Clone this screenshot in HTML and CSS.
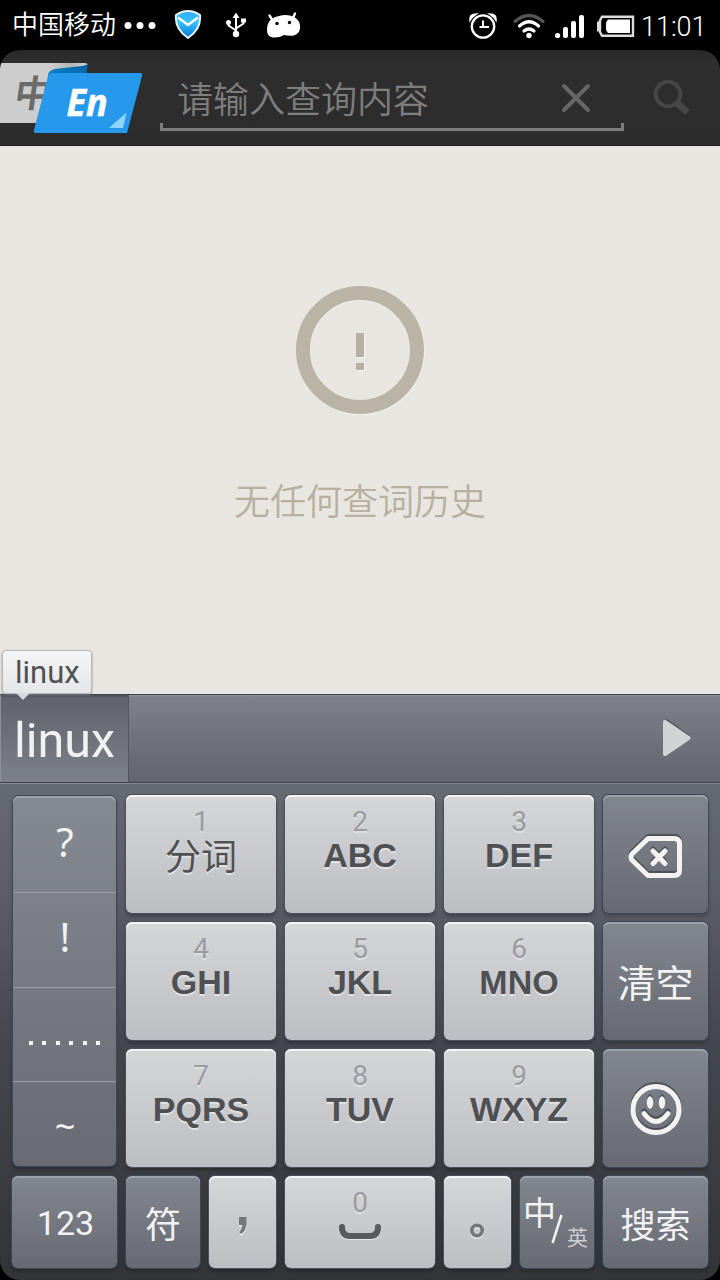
FILE: index.html
```html
<!DOCTYPE html>
<html lang="zh-CN">
<head>
<meta charset="utf-8">
<title>词典</title>
<link rel="stylesheet" href="styles.css">
</head>
<body>
<div class="phone">
  <div class="status">
    <span class="carrier">中国移动</span>
    <svg class="dots" width="32" height="50" viewBox="0 0 32 50" fill="#fff"><circle cx="4" cy="25.500" r="3.500"/><circle cx="16" cy="25.500" r="3.500"/><circle cx="28" cy="25.500" r="3.500"/></svg>
    <svg class="shield" width="28" height="50" viewBox="0 0 28 50"><defs><linearGradient id="sh" x1="0" y1="0" x2="0" y2="1"><stop offset="0" stop-color="#2ea9ff"/><stop offset=".4" stop-color="#38c4ff"/><stop offset="1" stop-color="#0873d8"/></linearGradient></defs><path d="M14 11Q20 11 26 15Q27.500 29 14 38Q.5 29 2 15Q8 11 14 11Z" fill="url(#sh)" stroke="#e9f3ff" stroke-width="2" stroke-linejoin="round"/><path d="M4 17.500L14 25L24 17.500" fill="none" stroke="#fff" stroke-width="2.200"/></svg>
    <svg class="usb" width="22" height="50" viewBox="0 0 22 50" fill="none" stroke="#fff" stroke-width="2"><path d="M11 35V15M3.500 23V25.500L11 30.500M18.500 21V23.500L11 28.500"/><path d="M11 12.500L14.500 18H7.500Z" fill="#fff" stroke="none"/><circle cx="11" cy="34" r="3.200" fill="#fff" stroke="none"/><circle cx="3.500" cy="22.500" r="2.500" fill="#fff" stroke="none"/><path d="M16 18.500H21V22.500H16Z" fill="#fff" stroke="none"/></svg>
    <svg class="robot" width="38" height="50" viewBox="0 0 38 50"><path d="M4.500 15.500L8 21M30 13.500L28 18" stroke="#fff" stroke-width="2.400" stroke-linecap="round"/><path d="M2 30Q2 18 14 16Q19 14.500 25 15.500Q34 18 35 25Q36 33 29 35.500Q24 36 19 35Q14 38 8 37.500Q2 37 2 30Z" fill="#fff"/><circle cx="12" cy="23.500" r="1.700"/><circle cx="24.500" cy="22.500" r="1.700"/></svg>
    <span class="spacer"></span>
    <svg class="alarm" width="30" height="50" viewBox="0 0 30 50" fill="none" stroke="#fff"><circle cx="15" cy="26.500" r="11.200" stroke-width="2.300"/><path d="M15 20.500V27H21M11.500 27H15" stroke-width="2"/><path d="M2 20.500Q1 14 8.500 14Q4 17 2 20.500ZM28 20.500Q29 14 21.500 14Q26 17 28 20.500Z" fill="#fff" stroke-width="1.500"/></svg>
    <svg class="wifi" width="32" height="50" viewBox="0 0 32 50" fill="none" stroke="#fff" stroke-width="3.200" stroke-linecap="round"><path d="M2 21.500Q16 9.500 30 21.500" stroke="#555"/><path d="M6.500 26Q16 17.500 25.500 26M11 31Q16 27 21 31"/><circle cx="16" cy="35.500" r="2.700" fill="#fff" stroke="none"/></svg>
    <svg class="signal" width="30" height="50" viewBox="0 0 30 50" fill="#fff"><circle cx="2.600" cy="35.500" r="2.600"/><rect x="8" y="27" width="5" height="11" rx="2"/><rect x="16" y="21" width="5" height="17" rx="2"/><rect x="24" y="15" width="5" height="23" rx="2"/></svg>
    <svg class="battery" width="38" height="50" viewBox="0 0 38 50"><path d="M0 21.500h4v10H0z" fill="#ddd"/><path d="M5 16.800H36V35.800H5L3 32V20.500Z" fill="none" stroke="#ddd" stroke-width="2.400"/><path d="M11 19.500H33V33H11L9 30V22.500Z" fill="#fff"/></svg>
    <span class="time">11:01</span>
  </div>

  <header class="header">
    <svg class="lang" width="142" height="96" viewBox="0 0 142 96">
      <defs>
        <linearGradient id="fold" x1="0" y1="1" x2="1" y2="0"><stop offset="0" stop-color="#0084cc"/><stop offset="1" stop-color="#005f9c"/></linearGradient>
        <linearGradient id="card" gradientUnits="userSpaceOnUse" x1="50" y1="13" x2="86" y2="13"><stop offset="0" stop-color="#cdcdcd"/><stop offset=".6" stop-color="#b4b4b4"/><stop offset="1" stop-color="#d4d4d4"/></linearGradient>
      </defs>
      <path d="M0 13H84Q88 13 87.500 15L68 73H0Z" fill="url(#card)"/>
      <text class="lang-zh" transform="translate(13 57) skewX(-8)">中</text>
      <path d="M48 24Q50 20 55 19L82 16Q87 15 88 13.500L86 26H48Z" fill="url(#fold)"/>
      <path d="M52 23H140Q143 23 142 26L127 83H36Q33 83 34 80L48 26Q49 23 52 23Z" fill="#2799ec"/>
      <path d="M126.500 62.500L123 78H109Z" fill="#8ed6ff"/>
      <text class="lang-en" x="66.500" y="66" textLength="41" lengthAdjust="spacingAndGlyphs">En</text>
    </svg>
    <div class="field">
      <span class="placeholder">请输入查询内容</span>
      <svg width="30" height="30" viewBox="0 0 30 30" fill="none" stroke="#666" stroke-width="4" stroke-linecap="round"><path d="M3 3L27 27M27 3L3 27"/></svg>
    </div>
    <svg class="search" width="40" height="40" viewBox="0 0 40 40" fill="none" stroke="#474747"><circle cx="16" cy="16" r="12.300" stroke-width="3.800"/><path d="M25.500 25.500L35.500 34.500" stroke-width="7"/></svg>
  </header>

  <main class="history">
    <svg class="notice" width="132" height="132" viewBox="0 0 132 132"><circle cx="66.700" cy="66.700" r="57" fill="none" stroke="#f6f4f1" stroke-width="14"/><circle cx="66" cy="66" r="57" fill="none" stroke="#bab4a7" stroke-width="14"/><path d="M63 50h8v24h-8zM63 80h8v7h-8z" fill="#f6f4f1"/><path d="M62 49h8v24h-8zM62 79h8v7h-8z" fill="#b7af9f"/></svg>
    <p class="empty">无任何查词历史</p>
  </main>

  <section class="keyboard">
    <div class="candidates">
      <div class="candidate">linux<div class="bubble">linux</div></div>
      <svg class="next" width="34" height="44" viewBox="0 0 34 44"><path d="M6 3.500L29 20" stroke="#50535b" stroke-width="2"/><path d="M5 6L28.500 22L5 38Z" fill="#d2d3d7" stroke="#d2d3d7" stroke-width="4" stroke-linejoin="round"/></svg>
    </div>
    <div class="keys">
      <div class="punct">
        <div class="mark question">?</div><div class="mark exclaim">!</div><div class="mark ellipsis"><i></i><i></i><i></i><i></i><i></i><i></i></div><div class="mark tilde">~</div>
      </div>
      <div class="key light"><span class="num">1</span><span class="cjk">分词</span></div>
      <div class="key light"><span class="num">2</span><span class="abc">ABC</span></div>
      <div class="key light"><span class="num">3</span><span class="abc">DEF</span></div>
      <div class="key dark center"><svg class="delete" width="56" height="48" viewBox="0 0 56 48" fill="none" stroke-width="5" stroke-linecap="round" stroke-linejoin="round"><g stroke="#4d5058" transform="translate(0 -2)"><path d="M20 4.500H46Q51.500 4.500 51.500 10V36Q51.500 41.500 46 41.500H20L4 26Q2 23 4 20Z"/><path d="M25 17L37 29.500M37 17L25 29.500"/></g><g stroke="#f2f2f2"><path d="M20 4.500H46Q51.500 4.500 51.500 10V36Q51.500 41.500 46 41.500H20L4 26Q2 23 4 20Z"/><path d="M25 17L37 29.500M37 17L25 29.500"/></g></svg></div>
      <div class="key light"><span class="num">4</span><span class="abc">GHI</span></div>
      <div class="key light"><span class="num">5</span><span class="abc">JKL</span></div>
      <div class="key light"><span class="num">6</span><span class="abc">MNO</span></div>
      <div class="key dark center clear">清空</div>
      <div class="key light"><span class="num">7</span><span class="abc">PQRS</span></div>
      <div class="key light"><span class="num">8</span><span class="abc">TUV</span></div>
      <div class="key light"><span class="num">9</span><span class="abc">WXYZ</span></div>
      <div class="key dark center"><svg class="smile" width="54" height="56" viewBox="0 0 54 56"><circle cx="27" cy="26.500" r="23" fill="none" stroke="#4d5058" stroke-width="5"/><circle cx="27" cy="28.500" r="23" fill="none" stroke="#f2f2f2" stroke-width="5"/><g fill="#4d5058"><ellipse cx="21" cy="20" rx="3.200" ry="6.500"/><ellipse cx="33" cy="20" rx="3.200" ry="6.500"/></g><g fill="#f2f2f2"><ellipse cx="21" cy="21.500" rx="3.200" ry="6.200"/><ellipse cx="33" cy="21.500" rx="3.200" ry="6.200"/></g><path d="M15 30Q27 46 39 30" fill="none" stroke="#4d5058" stroke-width="5" stroke-linecap="round"/><path d="M15 32.500Q27 48.500 39 32.500" fill="none" stroke="#f2f2f2" stroke-width="4.800" stroke-linecap="round"/></svg></div>
    </div>
    <div class="bottom">
      <div class="key dark center digits">123</div>
      <div class="key dark center fu">符</div>
      <div class="key light center"><svg class="comma" width="14" height="24" viewBox="0 0 14 24"><path d="M3 4.500H10.500V12Q10 18 5.500 21.500L3.500 20Q6 17 6.500 12.500H3Z" fill="#eee"/><path d="M3 3H10.500V10Q10 16 5.500 20L3.500 18.500Q6 15 6.500 11H3Z" fill="#747679"/></svg></div>
      <div class="key light"><span class="num">0</span><svg class="space" width="44" height="20" viewBox="0 0 44 20" fill="none" stroke-width="6" stroke-linecap="round"><path d="M4 6.500Q4 15 12 15H32Q40 15 40 6.500" stroke="#e6e6e8"/><path d="M4 5Q4 14 12 14H32Q40 14 40 5" stroke="#575a5f"/></svg></div>
      <div class="key light center"><svg class="stop" width="18" height="20" viewBox="0 0 18 20" fill="none" stroke-width="3.600"><circle cx="8" cy="11" r="5.200" stroke="#e7e7e9"/><circle cx="8" cy="9.500" r="5.200" stroke="#747679"/></svg></div>
      <div class="key dark switch"><span class="zh">中</span><svg width="14" height="32" viewBox="0 0 14 32"><path d="M10.500 2L1.500 30" stroke="#f2f2f2" stroke-width="2.500"/></svg><span class="en">英</span></div>
      <div class="key dark center go">搜索</div>
    </div>
  </section>
</div>
</body>
</html>
```
FILE: styles.css
```css
* { box-sizing: border-box; }
body { margin: 0; background: #000; font-family: Roboto, "Noto Sans CJK SC", sans-serif; }
svg { display: block; flex: none; }
.phone { width: 720px; height: 1280px; display: flex; flex-direction: column; overflow: hidden; background: #000; }

.status { height: 50px; display: flex; align-items: center; padding: 0 12px 0 12px; color: #fff; }
.carrier { width: 104px; font-size: 26px; line-height: 51px; height: 50px; font-weight: 350; white-space: nowrap; }
.dots { margin-left: 8px; }
.shield { margin-left: 18px; }
.usb { margin-left: 23px; }
.robot { margin-left: 18px; }
.spacer { flex: 1; }
.wifi { margin-left: 15px; }
.signal { margin-left: 10px; }
.battery { margin-left: 12px; }
.time { margin-left: 6px; font-size: 27px; line-height: 54px; height: 50px; font-weight: 350; white-space: nowrap; width: 67px; }

.header { height: 96px; display: flex; background: linear-gradient(#282828, #2e2e2e 12px, #2c2c2c); border-radius: 20px 20px 0 0; border-bottom: 1px solid #1f1b1b; overflow: hidden; }
.lang-zh { font: 700 37px "Noto Sans CJK SC", sans-serif; fill: #6b6b6b; }
.lang-en { font: italic 700 37px "Open Sans", "Noto Sans", sans-serif; fill: #fff; stroke: #fff; stroke-width: .6px; }
.field { width: 464px; height: 58px; margin: 23px 0 0 18px; padding: 0 33px 0 17px; display: flex; align-items: center; justify-content: space-between; border-bottom: 3px solid #7d7d7d; background: linear-gradient(#7d7d7d, #7d7d7d) left bottom / 3px 5px no-repeat, linear-gradient(#7d7d7d, #7d7d7d) right bottom / 3px 5px no-repeat; }
.field svg { margin-top: -6px; }
.placeholder { font-size: 36px; line-height: 54px; font-weight: 350; color: #7e7e7e; white-space: nowrap; margin-top: 1px; }
.search { margin: 28px 0 0 28px; }

.history { height: 548px; background: #e9e6e1; display: flex; flex-direction: column; align-items: center; padding-top: 138px; }
.empty { margin: 60px 0 0; font-size: 36px; line-height: 54px; font-weight: 350; color: #b7af9f; }

.keyboard { height: 586px; background: linear-gradient(#666a73 88px, #5b5e67 200px, #45474f 350px, #323438); border-radius: 0 0 20px 20px; }
.candidates { height: 89px; display: flex; justify-content: space-between; align-items: center; border-top: 1px solid #41434a; border-bottom: 1px solid #41444c; background: linear-gradient(#8b8e98 1px, #7d8089 2px, #62656e); padding-right: 26px; box-shadow: 0 1px #868992; }
.candidate { position: relative; width: 129px; height: 87px; padding-left: 13px; font-size: 48.5px; line-height: 91px; color: #f1f1f2; background: linear-gradient(#4d4f57, #62646d 3px, #7c8088); border-left: 1px solid #8c9099; border-right: 1px solid #53565e; }
.bubble { position: absolute; left: 1px; top: -45px; width: 90px; height: 44px; border: 1px solid #b6b8be; border-radius: 4px; background: linear-gradient(#f5f5f5, #e5e6e8); color: #505153; font-size: 31px; line-height: 44px; padding-left: 12px; box-shadow: 0 1px 2px #777a82; }
.bubble::after { content: ""; position: absolute; left: 13px; top: 42px; border: 7px solid transparent; border-top-color: #d5d7dc; border-bottom: 0; }
.next { margin-top: -1px; }

.keys { display: grid; grid-template-columns: 105px repeat(3, 150px) 105px; grid-auto-rows: 118px; gap: 9px; padding: 12px 12px 9px; }
.punct { grid-row: span 3; margin: 1px 0 1px 1px; width: 103px; border-radius: 6px; background: linear-gradient(#858991, #686b74); box-shadow: 0 0 0 1px #3b475b, 0 3px 4px #0004, inset 0 2px #a0a4ac; display: grid; grid-template-rows: 97px 95px 94px 1fr; }
.mark { border-bottom: 1px solid #9a9da5; color: #f2f2f2; font: 40px/92px "Noto Sans", sans-serif; text-align: center; padding-left: 1px; }
.mark:last-child { border: 0; }
.exclaim { line-height: 88px; }
.ellipsis { display: flex; justify-content: center; gap: 9.400px; padding: 53px 0 0; }
.ellipsis i { width: 4px; height: 4px; background: #f5f5f5; }
.tilde { font-size: 36px; line-height: 90px; }

.key { border-radius: 6px; display: flex; flex-direction: column; align-items: center; white-space: nowrap; }
.light { background: linear-gradient(#d5d6d8, #bdbec3); box-shadow: 0 0 0 1px #4b505b, 0 3px 4px #0005, inset 0 2px #f4f4f5; }
.dark { background: linear-gradient(#82868f, #676a73); color: #f2f2f2; box-shadow: 0 0 0 1px #3d475a, 0 3px 4px #0004, inset 0 2px #9da1a9; }
.center { justify-content: center; }
.delete { margin-top: 7px; }
.smile { margin-top: 2px; }
.num { height: 30px; margin-top: 12px; font-size: 28px; line-height: 30px; color: #999ba0; text-shadow: 0 2px #dedfe1; }
.abc { height: 40px; margin-top: -2px; font: 700 34px/40px "Liberation Sans", Arial, sans-serif; color: #4e5053; text-shadow: 0 2px #e2e3e5; }
.cjk { height: 40px; font-size: 36px; line-height: 42px; color: #4e5053; text-shadow: 0 2px #e2e3e5; }
.clear { font-size: 38px; padding-bottom: 2px; }
.bottom { display: grid; grid-template-columns: 105px 74px 67px 150px 67px 74px 105px; grid-template-rows: 92px; gap: 9px; padding: 0 12px; }
.digits { font-size: 34px; padding: 1px 0 0 2px; }
.fu { font-size: 36px; }
.comma { margin-top: 7px; }
.space { margin-top: 4px; }
.stop { margin-top: 18px; }
.switch { flex-direction: row; align-items: flex-start; padding: 0 0 0 3px; }
.switch .zh { font-size: 33px; line-height: 44px; margin-top: 16px; width: 28px; }
.switch svg { margin-top: 37px; }
.switch .en { font-size: 21px; line-height: 30px; margin: 47px 0 0 2px; color: #cdced1; }
.go { font-size: 35px; padding-top: 1px; }
```
